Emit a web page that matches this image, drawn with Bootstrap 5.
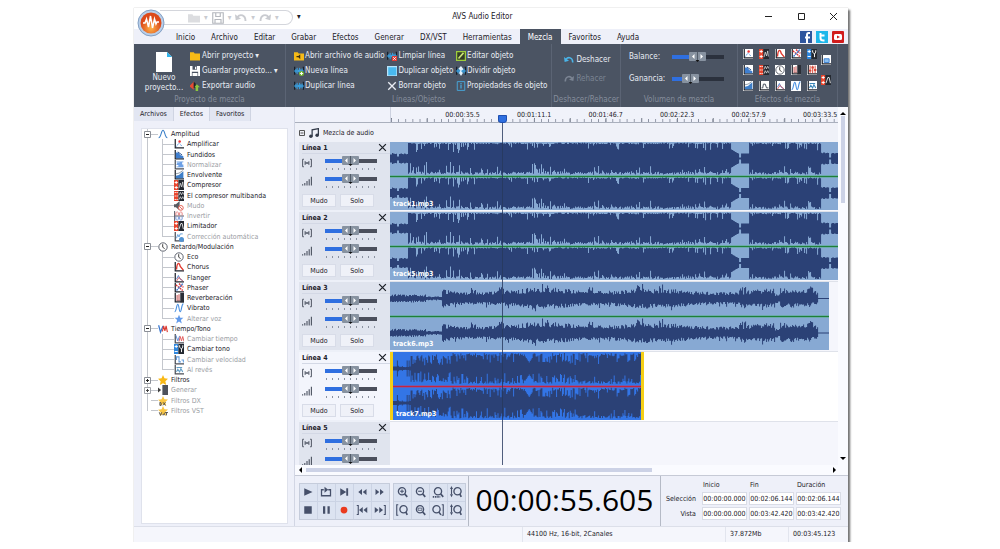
<!DOCTYPE html>
<html lang="es">
<head>
<meta charset="utf-8">
<meta name="viewport" content="width=device-width, initial-scale=1">
<title>AVS Audio Editor</title>
<link href="https://cdn.jsdelivr.net/npm/bootstrap@5.3.0/dist/css/bootstrap.min.css" rel="stylesheet">
<style>
:root{--ui:"DejaVu Sans Condensed","DejaVu Sans",sans-serif;--dark:#4b5463;--pale:#eef0f9;--line:#c5ccdb}
body{font-family:var(--ui);font-size:7px;line-height:10px;color:#1c2028;background:#fff}
button,input{font-family:inherit;font-size:inherit;line-height:inherit;color:inherit}
button{background:none;border:0;padding:0}
a{color:inherit;text-decoration:none}
.app-window{width:71.4%;margin:8px 0 0 13.4%;background:var(--pale);box-shadow:0 0 1px #aaa,2px 2px 2px #666}
.app-title,.menu-row,.ribbon{font-size:8px}
.app-title{height:21px;background:#fff}
.app-title h1{font:inherit;line-height:18px;padding-right:76px}
.orb{left:3px;top:1px;width:28px;height:28px;z-index:3}
.quick{margin-left:26px;margin-top:2px;width:133px;height:15px;border:1px solid #d4d6dc;border-left:0;border-radius:0 8px 8px 0;color:#c9cbd0}
.win-btns{width:84px;padding-right:10px}
.menu-row{height:15px;padding-left:34px}
.menu-row a{padding:0 8px;line-height:17px}
.menu-row a.active{background:var(--dark);color:#fff}
.ribbon{height:63px;background:var(--dark);color:#e9edf4}
.r-group{border-right:1px solid #5b6474;padding-top:4px}
.r-group>.cap{height:10px;color:#858d9b;text-align:center;white-space:nowrap}
.r-body{height:47px}
.cmd{display:flex;align-items:center;gap:2px;height:15px;white-space:nowrap}
.tight .cmd{gap:1px}
.cmd:disabled{color:#7b8493}
.new-btn{width:44px}
.i10{width:10px;height:10px;flex:none}
.i9{width:9px;height:9px;flex:none}
.i12{width:12px;height:12px;flex:none}
.fxgrid{display:grid;grid-template-columns:repeat(5,10px);gap:6px;align-content:start;padding-top:1px}
.fxcol{display:grid;row-gap:10px;align-content:start;padding-top:7px}
.fxgrid svg.plate,.fxcol svg.plate{background:#fff}
input[type=range]{-webkit-appearance:none;appearance:none;display:block;width:52px;height:10px;margin:0;background:linear-gradient(90deg,#2f6fe0 50%,var(--end,#4b4f5c) 50%) center/100% 4px no-repeat}
#gan{background:linear-gradient(90deg,#2f6fe0 35%,var(--end) 35%) center/100% 4px no-repeat}
input[type=range]::-webkit-slider-thumb{-webkit-appearance:none;width:17px;height:10px;border:0;background:url("data:image/svg+xml,%3Csvg xmlns='http://www.w3.org/2000/svg' viewBox='0 0 17 10'%3E%3Crect width='17' height='9' rx='1' fill='%238792a0'/%3E%3Cpath d='M8.500 0v8' stroke='%23525c69'/%3E%3Cpath d='M5.500 2v5L3 4.500zM11.500 2v5L14 4.500z' fill='%23fff'/%3E%3Cpath d='M6.500 8h4l-2 2z' fill='%23111'/%3E%3C/svg%3E")}
.vol input{--end:#2b313d}
.vol label{width:43px}
.side{width:22.400%}
.side-tabs{height:16px}
.side-tabs button{padding:0 6px;border-right:1px solid #cfd4e2;background:#e2e6f2;height:14px}
.side-tabs button.active{background:var(--pale)}
.tree-box{margin:5px 6px 2px 7px;background:#fff;border:1px solid #dfe2ec;padding:0 2px;flex:1}
.tree{height:287px}
.tree li{display:flex;align-items:center;flex:1;min-height:0;white-space:nowrap}
.tree .off{color:#9a9da3}
.tree .off svg{opacity:.8}
.t-root{width:7px;align-self:stretch;flex:none;display:flex;align-items:center;background:linear-gradient(#c4c7cd,#c4c7cd) 3px 0/1px 100% no-repeat}
.t-dash{width:7px;height:1px;flex:none;background:#c4c7cd}
.t-kid{width:12px;margin-left:11px;align-self:stretch;flex:none;background:linear-gradient(#c4c7cd,#c4c7cd) 0 0/1px 100% no-repeat,linear-gradient(#c4c7cd,#c4c7cd) 0 50%/100% 1px no-repeat}
.t-root.end,.t-kid.end{background-size:1px 50%,100% 1px}
.tree span.txt{margin-left:3px}
.main{border-left:1px solid #d2d6e4;min-width:0}
.head-col{width:95px;flex:none}
.ruler{height:16px;border-bottom:1px solid #aab0bd;background:#f0f2fa}
.ruler-scale{min-width:0;overflow:hidden;padding-left:6.600%;border-left:1px solid #ccd1df;background:linear-gradient(90deg,#8a90a0 1px,transparent 1px) 0 100%/1.600% 3px repeat-x,linear-gradient(90deg,#777e8b 1px,transparent 1px) 0 100%/8% 4px repeat-x}
.ruler-scale span{width:17.390%;flex:none;text-align:center;line-height:16px}
.mix-row{height:19px;background:#eff1f8}
.lanes{height:323px;overflow:hidden;background:#f5f6fc}
.lane{height:70px}
.lane-head{background:#e0e4ee;border-bottom:2px solid #edf0f8;border-left:4px solid var(--pale);padding-left:3px}
.lane.sel .lane-head{background:#f3f5fc}
.lane.sel{background:#fff}
.lane-name{height:12px;border-bottom:1px solid #d3d8e5;padding-right:3px}
.lane-ctl{height:18px;padding-right:13px}
.ticks{width:52px;height:2px;margin-top:2px;background:linear-gradient(90deg,#8a91a0 1px,transparent 1px) 1px 0/6px 2px repeat-x}
.ms{height:13px;width:34px;border:1px solid #d8dce8;background:#eff1f8}
.lane-body{min-width:0;border-bottom:1px solid #dfe2ea}
.clip{background:#87a9d3;height:68px}
.clip.act{background:#3375e6;border:solid #f5cf16;border-width:0 3px}
.clip svg{display:block;width:100%;height:68px}
.clip b{left:3px;bottom:1px;color:#fff;line-height:9px}
.playhead{left:25%;top:8px;bottom:0;width:9px;margin-left:-4px;z-index:2}
.playhead i{display:block;width:9px;height:8px;background:#2f6fe0;border:1px solid #1e4fb0;border-radius:0 0 3px 3px}
.playhead u{display:block;width:1px;height:100%;margin-left:4px;background:#27385c;opacity:.8}
.vbar{width:10px;flex:none;background:#fafbff}
.vbar i,.hbar i{background:#ccd2e6;display:block}
.vbar i{width:4px;height:87px;margin:1px auto}
.hbar{height:10px;background:#fafbff}
.hbar i{height:4px;width:64%}
.deck{height:51px;border-top:1px solid #c6cad6}
.keys{display:grid;border:1px solid var(--line);gap:1px;background:#cbd3e4}
.keys button{background:#dce3f1;height:17px;display:flex;align-items:center;justify-content:center}
#k1{margin-left:4px;grid-template-columns:repeat(5,17px)}
#k2{margin:0 2px 0 3px;grid-template-columns:repeat(4,17px)}
.clock-now{font-family:"Open Sans",sans-serif;font-size:30px;line-height:48px;color:#000;border:solid #b5bac6;border-width:0 1px;width:193px;text-align:center}
.times{margin:3px 0 0 4px}
.times th{font-weight:400;line-height:10px}
.times thead th{padding-left:3px}
.times td{padding:1px 0 1px 2px}
.times input{width:45px;height:13px;border:1px solid #d9dce6;background:#fff;padding:0;text-align:center;display:block}
.status{height:16px;background:#f5f6fc;border-top:1px solid #dcdfe9;line-height:15px}
.status span{border-left:1px solid #e2e5ee;padding-left:4px}
.st-a{width:203px}.st-b{width:63px}.st-c{width:60px}
</style>
</head>
<body>
<svg width="0" height="0" class="position-absolute" aria-hidden="true"><defs>
<symbol id="sine" viewBox="0 0 16 16"><path d="M1 14C5 14 5 2 8 2s3 12 7 12" fill="none" stroke="#3a7fc8" stroke-width="1.700"/></symbol>
<symbol id="ax" viewBox="0 0 16 16"><path d="M2 0v14h14" fill="none" stroke="#20252e" stroke-width="2"/></symbol>
<symbol id="amp" viewBox="0 0 16 16"><use href="#ax"/><path d="M4 12l4-6 5 6" fill="none" stroke="#5694dc" stroke-width="1.500" stroke-dasharray="2 1"/><circle cx="9" cy="4" r="2" fill="#e33"/></symbol>
<symbol id="fade" viewBox="0 0 16 16"><use href="#ax"/><path d="M3 13V4h4l3 4 5 2v3z" fill="#3f7fd0"/><path d="M6 3l7 5" stroke="#234b86" stroke-width="1.500"/></symbol>
<symbol id="norm" viewBox="0 0 16 16"><use href="#ax"/><path d="M4 3h11M4 11h11" stroke="#5d97e0" stroke-width="1.500"/><path d="M4 7h2V5h2v5h2V4h2v6h2V7" fill="none" stroke="#4a8ae0" stroke-width="2"/></symbol>
<symbol id="env" viewBox="0 0 16 16"><use href="#ax"/><path d="M3 13V9l5-1 3-3 4-3v11z" fill="#3f7fc8"/><path d="M3 6l5-1 6-4" stroke="#567" fill="none"/></symbol>
<symbol id="comp" viewBox="0 0 16 16"><path d="M0 0h7v16H0z" fill="#e8432b"/><path d="M1 4h5M3.500 1.500v5M1 12h5M3.500 9.500v5" stroke="#fff" stroke-width="1.500"/><path d="M7 0h9v16H7z" fill="#242930"/><path d="M8 13l2-8 2 6 2-8 1 9" fill="none" stroke="#fff"/></symbol>
<symbol id="multi" viewBox="0 0 16 16"><path d="M0 0h7v16H0z" fill="#e8432b"/><path d="M1 2.500h5M1 8h5M1 13.500h5" stroke="#fff" stroke-width="1.500" stroke-dasharray="2 1"/><path d="M7 0h9v16H7z" fill="#242930"/><path d="M8 7l2-5 2 4 2-4 2 4M8 14l2-5 2 4 2-4 2 4" fill="none" stroke="#fff"/></symbol>
<symbol id="lim" viewBox="0 0 16 16"><path d="M0 0h7v16H0z" fill="#e8432b"/><path d="M1 4h5M3.500 1.500v5M1 12h5M3.500 9.500v5" stroke="#fff" stroke-width="1.500"/><path d="M7 0h9v16H7z" fill="#242930"/><path d="M8 13l3-9h2l2 9" fill="none" stroke="#fff" stroke-width="1.300"/></symbol>
<symbol id="tone" viewBox="0 0 16 16"><path d="M0 0h7v16H0z" fill="#2e86dd"/><path d="M1 4h5M3.500 1.500v5M1 12h5" stroke="#fff" stroke-width="1.500"/><path d="M7 0h9v16H7z" fill="#242930"/><path d="M9 2v3l3 3v5M14 2v3l-2 3" fill="none" stroke="#fff" stroke-width="1.500"/></symbol>
<symbol id="mute" viewBox="0 0 16 16"><path d="M0 5h3l6-5v15l-6-5H0z" fill="#30343b"/><circle cx="11" cy="11" r="3.800" fill="#fff" stroke="#e04030" stroke-width="1.600"/><path d="M8.500 8.500l5 5" stroke="#e04030" stroke-width="1.500"/></symbol>
<symbol id="inv" viewBox="0 0 16 16"><path d="M1 0v16M1 8h15" stroke="#223" stroke-width="1.500"/><path d="M3 7V3q2-4 4 0v4m2 0V3q2-4 4 0v4" fill="none" stroke="#d44" stroke-width="1.300"/><path d="M3 9v4q2 4 4 0V9m2 0v4q2 4 4 0V9" fill="none" stroke="#36c" stroke-width="1.300"/></symbol>
<symbol id="auto" viewBox="0 0 16 16"><use href="#ax"/><path d="M4 10l2-6 2 4 2-5h4" fill="none" stroke="#3c86d0" stroke-width="1.500"/><circle cx="12" cy="12" r="4" fill="#2879c9"/></symbol>
<symbol id="clk" viewBox="0 0 16 16"><circle cx="8" cy="8" r="6.700" fill="#fff" stroke="#555b66" stroke-width="1.500"/><path d="M7.500 3.500V8l3 3" fill="none" stroke="#333" stroke-width="1.500"/></symbol>
<symbol id="cho" viewBox="0 0 16 16"><use href="#ax"/><path d="M4 12C5 0 8 0 10 7l5 6" fill="none" stroke="#e0382d" stroke-width="2.200"/></symbol>
<symbol id="fla" viewBox="0 0 16 16"><use href="#ax"/><path d="M4 10l3-6 3 6 4 2" fill="none" stroke="#3a6cc0" stroke-width="1.300"/><path d="M4 13l4-6 6 6" fill="none" stroke="#d44" stroke-width="1.300"/></symbol>
<symbol id="bell" viewBox="0 0 16 16"><use href="#ax"/><path d="M4 11h2l1-6h3l2 6h3" fill="none" stroke="#4a5361" stroke-width="1.600"/></symbol>
<symbol id="bbell" viewBox="0 0 16 16"><use href="#ax"/><path d="M5 12V6h8v6z" fill="#8cc0f0" stroke="#3c7fd0" stroke-width="1.500"/></symbol>
<symbol id="pha" viewBox="0 0 16 16"><use href="#ax"/><path d="M3 3l11 9M8 1l7 6" stroke="#d33" stroke-width="2.200" stroke-dasharray="3 1"/><path d="M4 12L14 1" stroke="#3a78d0" stroke-width="2.200" stroke-dasharray="3 1"/></symbol>
<symbol id="rev" viewBox="0 0 16 16"><use href="#ax"/><path d="M5 3v9M8 2v10" stroke="#c66" stroke-width="1.800"/><path d="M10 0h6v15h-6z" fill="#2a2e36"/><path d="M4 12h6" stroke="#844"/></symbol>
<symbol id="eqz" viewBox="0 0 16 16"><use href="#ax"/><path d="M5 1v12M9 1v12M13 1v12" stroke="#d8493a" stroke-width="1.500"/><path d="M3 9h4M7 4h4M11 8h4" stroke="#d8493a" stroke-width="3"/></symbol>
<symbol id="vib" viewBox="0 0 16 16"><path d="M1 14C4 14 4 2 6 2s2 12 4 12 2-12 5-13" fill="none" stroke="#4a90e0" stroke-width="1.800"/></symbol>
<symbol id="bstar" viewBox="0 0 16 16"><path d="M8 1l2 5h5l-4 3.500 1.500 5.500L8 12l-4.500 3L5 9.500 1 6h5z" fill="#3b82e6"/></symbol>
<symbol id="ystar" viewBox="0 0 16 16"><path d="M8 0l2.300 5.200 5.700.6-4.200 4L13 16l-5-3-5 3 1.200-6.200L0 5.800l5.700-.6z" fill="#f9b916"/></symbol>
<symbol id="ystarx" viewBox="0 0 16 16"><use href="#ystar"/><path d="M3 10v5h2V11zM8 10l4 5M12 10l-4 5" stroke="#2a2620" stroke-width="1.500" fill="none"/></symbol>
<symbol id="ystarv" viewBox="0 0 16 16"><use href="#ystar"/><path d="M2 10l2 5 2-5M7 14h3v-3M11 10.500h5M13.500 10v5" stroke="#2a2620" stroke-width="1.500" fill="none"/></symbol>
<symbol id="tt" viewBox="0 0 16 16"><path d="M1 2l3 11 4-10" fill="none" stroke="#3a78d0" stroke-width="2"/><path d="M7 12l2-9 2 8 2-8 2 10" fill="none" stroke="#dd3c32" stroke-width="1.800"/></symbol>
<symbol id="tmp" viewBox="0 0 16 16"><use href="#ax"/><path d="M3 2l3 9 3-8" fill="none" stroke="#3a78d0" stroke-width="1.600"/><path d="M8 12l2-8 2 7 2-7 2 8" fill="none" stroke="#d33" stroke-width="1.500"/></symbol>
<symbol id="spd" viewBox="0 0 16 16"><use href="#ax"/><path d="M4 8V3h4v8h3M12 8h3v4" fill="none" stroke="#3c86d8" stroke-width="1.700"/></symbol>
<symbol id="bck" viewBox="0 0 16 16"><use href="#ax"/><path d="M4 4h9M4 11l2-4 3 4 2-5 3 5" fill="none" stroke="#3c86b8" stroke-width="1.700"/></symbol>
<symbol id="gen" viewBox="0 0 16 16"><path d="M7 0h9v16H7z" fill="#222833"/><path d="M0 4l5 4-5 4z" fill="#111"/></symbol>
<symbol id="folder" viewBox="0 0 16 16"><path d="M0 2h6l1.500 2H16v11H0z" fill="#f6ba17"/></symbol>
<symbol id="folderA" viewBox="0 0 16 16"><use href="#folder"/><path d="M4 8h3l3-3v8l-3-3H4z" fill="#3a2c10"/></symbol>
<symbol id="floppy" viewBox="0 0 16 16"><path d="M0 0h16v16H0z" fill="#fff"/><path d="M4 0h7v6H4zM3 9h10v7H3z" fill="#4b5463"/><path d="M8 1h2v4H8zM4 11h8v5H4z" fill="#fff"/></symbol>
<symbol id="exp" viewBox="0 0 16 16"><path d="M0 7l5-5 1-2v14L0 9z" fill="#e74b32"/><path d="M6 1l3 3v7H6z" fill="#222"/><path d="M11 5l5 5h-3v6H9v-6H7z" fill="#8cc63e"/></symbol>
<symbol id="wav" viewBox="0 0 16 16"><path d="M1 1v13M15 1v13" stroke="#16202c" stroke-width="2"/><path d="M0 8h16M3 5v6M5 3v10M7 6v4M9 3v10M11 5v6M13 4v8" stroke="#38a5e8" stroke-width="1.600"/></symbol>
<symbol id="wavp" viewBox="0 0 16 16"><use href="#wav"/><circle cx="12" cy="12" r="4" fill="#79b833"/><path d="M12 9.500v5M9.500 12h5" stroke="#fff" stroke-width="1.500"/></symbol>
<symbol id="wavx" viewBox="0 0 16 16"><use href="#wav"/><path d="M8 8h8v8H8z" fill="#dc3d38"/><path d="M10 10l4 4M14 10l-4 4" stroke="#fff" stroke-width="1.500"/></symbol>
<symbol id="dup" viewBox="0 0 16 16"><path d="M0 0h16v16H0z" fill="#b8e4fa"/><path d="M2 2h13v13H2z" fill="#48b9ef"/></symbol>
<symbol id="ex" viewBox="0 0 16 16"><path d="M2 2l12 12M14 2L2 14" stroke="currentColor" stroke-width="2.200"/></symbol>
<symbol id="edit" viewBox="0 0 16 16"><path d="M1 1h14v14H1z" fill="#333d26" stroke="#9dce3c" stroke-width="2"/><path d="M4 12l8-9" stroke="#cde67a" stroke-width="2.500"/></symbol>
<symbol id="split" viewBox="0 0 16 16"><use href="#wav"/><path d="M8 0l4 5-4 3 3 3-3 5-3-5 2-4-3-3z" fill="#e4f2fc"/></symbol>
<symbol id="info" viewBox="0 0 16 16"><path d="M2 1h12v14H2z" fill="none" stroke="#48a8dc" stroke-width="1.500"/><path d="M8 3v2M8 6v6" stroke="#48a8dc" stroke-width="2"/></symbol>
<symbol id="undo" viewBox="0 0 16 16"><path d="M3 7C7 2 14 4 14 12" fill="none" stroke="currentColor" stroke-width="2.500"/><path d="M0 3l1 8 7-2z" fill="currentColor"/></symbol>
<symbol id="redo" viewBox="0 0 16 16"><path d="M13 7C9 2 2 4 2 12" fill="none" stroke="currentColor" stroke-width="2.500"/><path d="M16 3l-1 8-7-2z" fill="currentColor"/></symbol>
<symbol id="pan" viewBox="0 0 16 16"><path d="M3 2H1v12h2M13 2h2v12h-2M5 5v6M8 6.500v3M11 5v6M5 8h6" fill="none" stroke="#454c5a" stroke-width="1.500"/></symbol>
<symbol id="vol" viewBox="0 0 16 16"><path d="M1 13v2M4.500 11v4M8 8v7M11.500 5v10M15 1v14" stroke="#454c5a" stroke-width="1.700"/></symbol>
</defs></svg>

<main class="app-window">
<header class="app-title d-flex position-relative">
 <svg class="orb position-absolute" viewBox="0 0 28 28"><defs><radialGradient id="og" cy=".75"><stop offset="0" stop-color="#ffb347"/><stop offset="1" stop-color="#dc4a1b"/></radialGradient></defs><circle cx="14" cy="14" r="13" fill="#b9cfe9" stroke="#829fc4"/><circle cx="14" cy="14" r="10.500" fill="url(#og)"/><path d="M6 14h2l1.500-4 2 8 2-11 2 12 2-9 1.500 5 1-2h2" fill="none" stroke="#fff" stroke-width="1.500"/></svg>
 <div class="quick d-flex align-items-center gap-1 ps-4">
  <svg class="i12 ms-1" viewBox="0 0 16 16"><path d="M0 3h6l1 2h9v9H0z" fill="#dcdde0"/></svg><span>▾</span><svg class="i12" viewBox="0 0 16 16"><path d="M1 1h14v14H1zM5 1v5h6V1M4 15v-5h8v5" fill="none" stroke="#b4b7bd" stroke-width="1.500"/></svg><span>▾</span><svg class="i12"><use href="#undo"/></svg><span>▾</span><svg class="i12"><use href="#redo"/></svg><span>▾</span>
 </div>
 <span class="ms-1 mt-1" aria-hidden="true">▾</span>
 <h1 class="flex-grow-1 m-0 text-center">AVS Audio Editor</h1>
 <div class="win-btns d-flex justify-content-between align-items-center ms-4 pb-1">
  <button aria-label="Minimizar"><svg class="i9" viewBox="0 0 9 9"><path d="M1 4.500h7" stroke="#222"/></svg></button>
  <button aria-label="Maximizar"><svg class="i9" viewBox="0 0 9 9"><path d="M1.500 1.500h6v6h-6z" fill="none" stroke="#222"/></svg></button>
  <button aria-label="Cerrar"><svg class="i9" viewBox="0 0 9 9"><path d="M1 1l7 7M8 1L1 8" stroke="#222"/></svg></button>
 </div>
</header>
<nav class="menu-row d-flex">
 <a href="#">Inicio</a><a href="#">Archivo</a><a href="#">Editar</a><a href="#">Grabar</a><a href="#">Efectos</a><a href="#">Generar</a><a href="#">DX/VST</a><a href="#">Herramientas</a><a href="#" class="active">Mezcla</a><a href="#">Favoritos</a><a href="#">Ayuda</a>
 <span class="ms-auto d-flex gap-1 pe-1 align-items-center">
  <svg class="i12" viewBox="0 0 12 12"><path d="M0 0h12v12H0z" fill="#2f569e"/><path d="M10 2H8.500Q7 2 7 4v8M5 6.500h5" fill="none" stroke="#fff" stroke-width="2"/></svg>
  <svg class="i12" viewBox="0 0 12 12"><path d="M0 0h12v12H0z" fill="#1eb7ea"/><path d="M4.500 2v5q0 2.500 3 2.500h1M4.500 4.500h4" fill="none" stroke="#fff" stroke-width="2"/></svg>
  <svg class="i12" viewBox="0 0 12 12"><rect width="12" height="12" rx="1" fill="#d11c1c"/><rect x="2" y="3" width="8" height="6" rx="1.500" fill="#fff"/><path d="M5 4.500v3L8 6z" fill="#d11c1c"/></svg>
 </span>
</nav>
<section class="ribbon d-flex">
 <div class="r-group" style="width:21.300%"><div class="r-body d-flex">
  <button class="new-btn ms-2 text-center"><svg width="18" height="22" viewBox="0 0 18 22" class="d-block mx-auto"><path d="M1 1h11l5 5v15H1z" fill="#fff"/><path d="M12 1l5 5h-5z" fill="#2fb4ec"/></svg>Nuevo proyecto...</button>
  <div class="ms-1"><button class="cmd"><svg class="i10"><use href="#folder"/></svg>Abrir proyecto <span>▾</span></button><button class="cmd"><svg class="i10"><use href="#floppy"/></svg>Guardar proyecto... <span>▾</span></button><button class="cmd"><svg class="i10"><use href="#exp"/></svg>Exportar audio</button></div>
 </div><div class="cap">Proyecto de mezcla</div></div>
 <div class="r-group" style="width:37.300%"><div class="r-body tight d-flex justify-content-between px-1"><div class="ms-1"><button class="cmd"><svg class="i10"><use href="#folderA"/></svg>Abrir archivo de audio</button><button class="cmd"><svg class="i10"><use href="#wavp"/></svg>Nueva línea</button><button class="cmd"><svg class="i10"><use href="#wav"/></svg>Duplicar línea</button></div>
 <div><button class="cmd"><svg class="i10"><use href="#wavx"/></svg>Limpiar línea</button><button class="cmd"><svg class="i10"><use href="#dup"/></svg>Duplicar objeto</button><button class="cmd"><svg class="i10"><use href="#ex"/></svg>Borrar objeto</button></div>
 <div><button class="cmd"><svg class="i10"><use href="#edit"/></svg>Editar objeto</button><button class="cmd"><svg class="i10"><use href="#split"/></svg>Dividir objeto</button><button class="cmd"><svg class="i10"><use href="#info"/></svg>Propiedades de objeto</button></div></div><div class="cap">Líneas/Objetos</div></div>
 <div class="r-group" style="width:9.600%"><div class="r-body px-2 pt-1"><button class="cmd mb-1 ms-1"><svg class="i10" style="color:#4ab4e8"><use href="#undo"/></svg>Deshacer</button><button class="cmd ms-1" disabled><svg class="i10"><use href="#redo"/></svg>Rehacer</button></div><div class="cap">Deshacer/Rehacer</div></div>
 <div class="r-group" style="width:16.400%"><div class="r-body vol px-2"><div class="d-flex align-items-center mb-2 pt-1"><label for="bal">Balance:</label><input id="bal" type="range"></div><div class="d-flex align-items-center pt-1"><label for="gan">Ganancia:</label><input id="gan" type="range" min="0" max="100" value="28"></div></div><div class="cap">Volumen de mezcla</div></div>
 <div class="r-group" style="width:14%"><div class="r-body d-flex justify-content-center gap-1"><div id="fx" class="fxgrid"></div><div id="fx2" class="fxcol"></div></div><div class="cap">Efectos de mezcla</div></div>
</section>
<div class="d-flex">
 <aside class="side d-flex flex-column">
  <div class="side-tabs d-flex"><button>Archivos</button><button class="active">Efectos</button><button>Favoritos</button></div>
  <div class="tree-box"><ul id="tree" class="tree list-unstyled d-flex flex-column m-0"></ul></div>
 </aside>
 <section class="main flex-grow-1">
  <div class="d-flex">
   <div class="flex-grow-1 position-relative overflow-hidden">
    <div class="ruler d-flex"><div class="head-col"></div><div class="ruler-scale d-flex flex-grow-1"><span>00:00:35.5</span><span>00:01:11.1</span><span>00:01:46.7</span><span>00:02:22.3</span><span>00:02:57.9</span><span>00:03:33.5</span></div></div>
    <div class="mix-row d-flex align-items-center gap-1 ps-1"><svg width="6" height="6" viewBox="0 0 6 6"><path d="M.5.5h5v5h-5zM1.500 3h3" fill="none" stroke="#555"/></svg><svg class="i10" viewBox="0 0 16 16"><path d="M5 13V3l10-2v10" fill="none" stroke="#333b49" stroke-width="2"/><circle cx="3" cy="13" r="2.800" fill="#333b49"/><circle cx="13" cy="11.500" r="2.800" fill="#333b49"/></svg><span>Mezcla de audio</span></div>
    <div id="lanes" class="lanes"></div>
    <div class="d-flex position-absolute top-0 bottom-0 start-0 end-0 pe-none"><div class="head-col"></div><div class="flex-grow-1 position-relative"><div class="playhead position-absolute overflow-hidden"><i></i><u></u></div></div></div>
   </div>
   <div class="vbar d-flex flex-column"><svg width="6" height="4" class="d-block mx-auto mt-1" viewBox="0 0 6 4"><path d="M0 4l3-3 3 3z"/></svg><i></i><svg width="6" height="4" class="d-block mx-auto mt-auto mb-1" viewBox="0 0 6 4"><path d="M0 0l3 3 3-3z"/></svg></div>
  </div>
  <div class="hbar d-flex align-items-center ps-1 pe-2"><svg width="3" height="6" class="me-1" viewBox="0 0 3 6"><path d="M3 0L0 3l3 3z"/></svg><i></i><svg width="3" height="6" class="ms-auto me-1" viewBox="0 0 3 6"><path d="M0 0l3 3-3 3z"/></svg></div>
  <div class="deck d-flex">
   <div class="keys align-self-center" id="k1"></div>
   <div class="keys align-self-center" id="k2"></div>
   <output class="clock-now">00:00:55.605</output>
   <table class="times align-self-start"><thead><tr><td></td><th scope="col">Inicio</th><th scope="col">Fin</th><th scope="col">Duración</th></tr></thead><tbody>
   <tr><th scope="row" class="text-end pe-1">Selección</th><td><input aria-label="Selección inicio" value="00:00:00.000"></td><td><input aria-label="Selección fin" value="00:02:06.144"></td><td><input aria-label="Selección duración" value="00:02:06.144"></td></tr>
   <tr><th scope="row" class="text-end pe-1">Vista</th><td><input aria-label="Vista inicio" value="00:00:00.000"></td><td><input aria-label="Vista fin" value="00:03:42.420"></td><td><input aria-label="Vista duración" value="00:03:42.420"></td></tr></tbody></table>
  </div>
 </section>
</div>
<footer class="status d-flex"><span class="st-a ms-auto">44100 Hz, 16-bit, 2Canales</span><span class="st-b">37.872Mb</span><span class="st-c">00:03:45.123</span></footer>
</main>
<script src="https://cdn.jsdelivr.net/npm/bootstrap@5.3.0/dist/js/bootstrap.bundle.min.js"></script>
<script>
const byId = id => document.getElementById(id);
const icon = (id, cls = 'i10') => `<svg class="${cls}" aria-hidden="true"><use href="#${id}"/></svg>`;

// Effects tree: [level, icon, label, enabled, toggle sign]
const items = [
 [0,'sine','Amplitud',1,'-'],[1,'amp','Amplificar',1],[1,'fade','Fundidos',1],[1,'norm','Normalizar',0],[1,'env','Envolvente',1],
 [1,'comp','Compresor',1],[1,'multi','El compresor multibanda',1],[1,'mute','Mudo',0],[1,'inv','Invertir',0],[1,'lim','Limitador',1],[1,'auto','Corrección automática',0],
 [0,'clk','Retardo/Modulación',1,'-'],[1,'clk','Eco',1],[1,'cho','Chorus',1],[1,'fla','Flanger',1],[1,'pha','Phaser',1],[1,'rev','Reverberación',1],[1,'vib','Vibrato',1],[1,'bstar','Alterar voz',0],
 [0,'tt','Tiempo/Tono',1,'-'],[1,'tmp','Cambiar tiempo',0],[1,'tone','Cambiar tono',1],[1,'spd','Cambiar velocidad',0],[1,'bck','Al revés',0],
 [0,'ystar','Filtros',1,'+'],[0,'gen','Generar',0,'+'],[0,'ystarx','Filtros DX',0],[0,'ystarv','Filtros VST',0]];
byId('tree').innerHTML = items.map(([lv, ic, label, on, sign], i) => {
  const box = sign ? `<svg width="7" height="7" viewBox="0 0 7 7"><path d="M.5.5h6v6h-6z" fill="#fff" stroke="#8b8f97"/><path d="M2 3.500h3${sign === '+' ? 'M3.500 2v3' : ''}" stroke="#222"/></svg>` : '';
  const root = `<span class="t-root ${i === items.length - 1 ? 'end' : ''}">${box}</span>`;
  const lastKid = lv && items[i + 1][0] === 0;
  return `<li class="${on ? '' : 'off'}">${root}${lv ? `<span class="t-kid ${lastKid ? 'end' : ''}"></span>` : '<span class="t-dash"></span>'}${icon(ic)}<span class="txt">${label}</span></li>`;
}).join('');

// Effect shortcuts of the ribbon
const solid = ['comp', 'multi', 'lim', 'tone'];
const plate = id => icon(id, solid.includes(id) ? 'i10' : 'i10 plate');
byId('fx').innerHTML = ['amp','comp','cho','pha','tone','fade','multi','clk','rev','eqz','env','bell','fla','vib','bck'].map(plate).join('');
byId('fx2').innerHTML = ['bbell','lim'].map(plate).join('');

// Transport and zoom keys
const G = '#46506a';
const mag = '<circle cx="8" cy="7" r="4.800" fill="none" stroke="#46506a" stroke-width="1.800"/><path d="M11.500 10.500L15 14.500" stroke="#46506a" stroke-width="2.200"/>';
const magR = mag.replace('cx="8"', 'cx="10"').replace('M11.500', 'M13');
const arrows = `<path d="M2 4v7" stroke="${G}" stroke-width="1.500"/><path d="M0 4l2-4 2 4zM0 11l2 4 2-4z" fill="${G}"/>`;
const key = ([label, body]) => `<button aria-label="${label}"><svg width="12" height="12" viewBox="0 0 16 16" fill="${G}" aria-hidden="true">${body}</svg></button>`;
byId('k1').innerHTML = [
 ['Reproducir','<path d="M3 3l11 5-11 5z"/>'],
 ['Bucle',`<path d="M5 5H2v8h12V5h-3" fill="none" stroke="${G}" stroke-width="1.700"/><path d="M6 1l5 4-5 4z"/>`],
 ['Siguiente','<path d="M3 3l8 5-8 5zM11 3h2.500v10H11z"/>'],
 ['Rebobinar','<path d="M8 4v8L3 8zM14 4v8L9 8z"/>'],
 ['Avanzar','<path d="M2 4v8l5-4zM8 4v8l5-4z"/>'],
 ['Detener','<path d="M3 3h10v10H3z"/>'],
 ['Pausa','<path d="M4 3h3v10H4zM10 3h3v10h-3z"/>'],
 ['Grabar','<circle cx="8" cy="8" r="4.500" fill="#ea3a1e"/>'],
 ['Ir al inicio',`<path d="M1 2h2v12H1" fill="none" stroke="${G}" stroke-width="1.500"/><path d="M9 4v8L4 8zM15 4v8l-5-4z"/>`],
 ['Ir al final',`<path d="M13 2h2v12h-2" fill="none" stroke="${G}" stroke-width="1.500"/><path d="M1 4v8l5-4zM7 4v8l5-4z"/>`]].map(key).join('');
byId('k2').innerHTML = [
 ['Acercar', mag + `<path d="M5.500 7h5M8 4.500v5" stroke="${G}" stroke-width="1.400"/>`],
 ['Alejar', mag + `<path d="M5.500 7h5" stroke="${G}" stroke-width="1.400"/>`],
 ['Zoom 100', mag + `<path d="M1 14.500h10" stroke="${G}" stroke-width="2.500" stroke-dasharray="2 1"/>`],
 ['Acercar vertical', arrows + magR],
 ['Zoom izquierda', `<path d="M3 1H1v14h2" fill="none" stroke="${G}" stroke-width="1.500"/>` + magR],
 ['Zoom selección', mag + '<path d="M5.500 5.500h5v3h-5z" fill="none" stroke="#46506a"/>'],
 ['Zoom derecha', mag.replace('cx="8"', 'cx="6"').replace('M11.500 10.500L15', 'M9 10.500L12') + `<path d="M13 1h2v14h-2" fill="none" stroke="${G}" stroke-width="1.500"/>`],
 ['Alejar vertical', arrows + magR]].map(key).join('');

// Waveforms: one filled outline per channel, drawn from a seeded random sequence
const seeded = s => () => {
  s = (s + 0x6D2B79F5) | 0;
  let t = Math.imul(s ^ (s >>> 15), 1 | s);
  t = (t + Math.imul(t ^ (t >>> 7), 61 | t)) ^ t;
  return ((t ^ (t >>> 14)) >>> 0) / 4294967296;
};
function outline(w, mid, level, rnd) {
  let up = '', down = '';
  for (let x = 0; x < w; x++) {
    const [a, b] = level(x, rnd);
    up += `L${x} ${(mid - a).toFixed(1)}L${x + 1} ${(mid - a).toFixed(1)}`;
    down = `L${x + 1} ${(mid + b).toFixed(1)}L${x} ${(mid + b).toFixed(1)}` + down;
  }
  return `M0 ${mid}${up}${down}Z`;
}
const loud = (x, r) => {
  if (x < 18) { const v = x > 6 && x < 9 ? 2 : 4 + r() * 1.500; return [v, v]; }
  if (x >= 341 && x < 359) { if (x > 348 && x < 351) return [1, 1]; const v = x < 348 ? 9 - (x - 341) * .6 : 5; return [v, v]; }
  if (x >= 431) { if (x > 438 && x < 441) return [1, 1]; const v = 5 + r(); return [v, v]; }
  const busy = x < 70 || (x > 140 && x < 165);
  const cut = low => (low ? 16.200 : 15.800) - r() * (low ? 3 : 1.500) - (r() < (busy ? .35 : .14) ? r() * (busy ? 10 : 7) : 0);
  return [cut(false), cut(true)];
};
const soft = (x, r) => {
  if (x > 427) return [.5, .5];
  let e = x < 36 ? 3 : x < 52 ? 1.500 : 6 + Math.sin(x / 19) * 1.300;
  if (x > 135 && x < 260) e += .8;
  if (x > 384 && x < 390) e = 3.500;
  const peak = x > 52 && [82, 110, 155, 200, 250, 270, 352, 420].some(p => Math.abs(x - p) < 4) ? 4 : 0;
  return [e * (.7 + r() * .7) + (r() < .6 ? peak : 0), e * (.7 + r() * .6) + (r() < .05 && x > 52 ? 3 : 0)];
};
const mid4 = (x, r) => {
  if (x < 18) { const v = r() < .2 ? 8 : 1 + r() * 2; return [v, v]; }
  if (x > 134 && x < 143) { const v = 6 + Math.abs(x - 139) * 1.500; return [v, v]; }
  const many = x < 75 || (x > 143 && x < 200), top = x < 60 ? 14 : 15.500;
  const cut = () => top - r() * 3 - (r() < (many ? .5 : .3) ? r() * 9 : 0);
  return [cut(), cut()];
};
const wave = (w, level, seed, line, glow) => `<svg viewBox="0 0 ${w} 68" preserveAspectRatio="none" aria-hidden="true"><path fill="#2b4176" d="${outline(w, 16.500, level, seeded(seed))}${outline(w, 51, level, seeded(seed))}"/><path d="M0 34.500h${w}" stroke="${glow}" stroke-width="3" opacity=".35"/><path d="M0 34.500h${w}" stroke="${line}" stroke-width="1.200"/></svg>`;
const lanes = [
 { file: 'track1.mp3', w: 448, f: loud, seed: 7 }, { file: 'track5.mp3', w: 448, f: loud, seed: 7 },
 { file: 'track6.mp3', w: 439, f: soft, seed: 23 }, { file: 'track7.mp3', w: 254, f: mid4, seed: 41, sel: 1 }, {}];
byId('lanes').innerHTML = lanes.map((l, i) => `
 <div class="lane d-flex ${l.sel ? 'sel' : ''}">
  <div class="head-col lane-head">
   <div class="lane-name d-flex align-items-center justify-content-between"><b>Línea ${i + 1}</b><button aria-label="Cerrar línea ${i + 1}">${icon('ex', 'i9 d-block')}</button></div>
   ${['pan', 'vol'].map(k => `<div class="lane-ctl d-flex align-items-center justify-content-between">${icon(k)}<div><input type="range" aria-label="${k === 'pan' ? 'Balance' : 'Volumen'} línea ${i + 1}"><div class="ticks"></div></div></div>`).join('')}
   ${l.file ? '<div class="d-flex gap-1 mt-1"><button class="ms">Mudo</button><button class="ms">Solo</button></div>' : ''}
  </div>
  <div class="lane-body flex-grow-1">${l.file ? `<div class="clip position-relative ${l.sel ? 'act' : ''}" style="width:${(l.w / 4.48).toFixed(1)}%">${wave(l.w, l.f, l.seed, l.sel ? '#c8233c' : '#1f7f38', l.sel ? '#e0304a' : '#38b060')}<b class="position-absolute">${l.file}</b></div>` : ''}</div>
 </div>`).join('');
</script>
</body>
</html>
